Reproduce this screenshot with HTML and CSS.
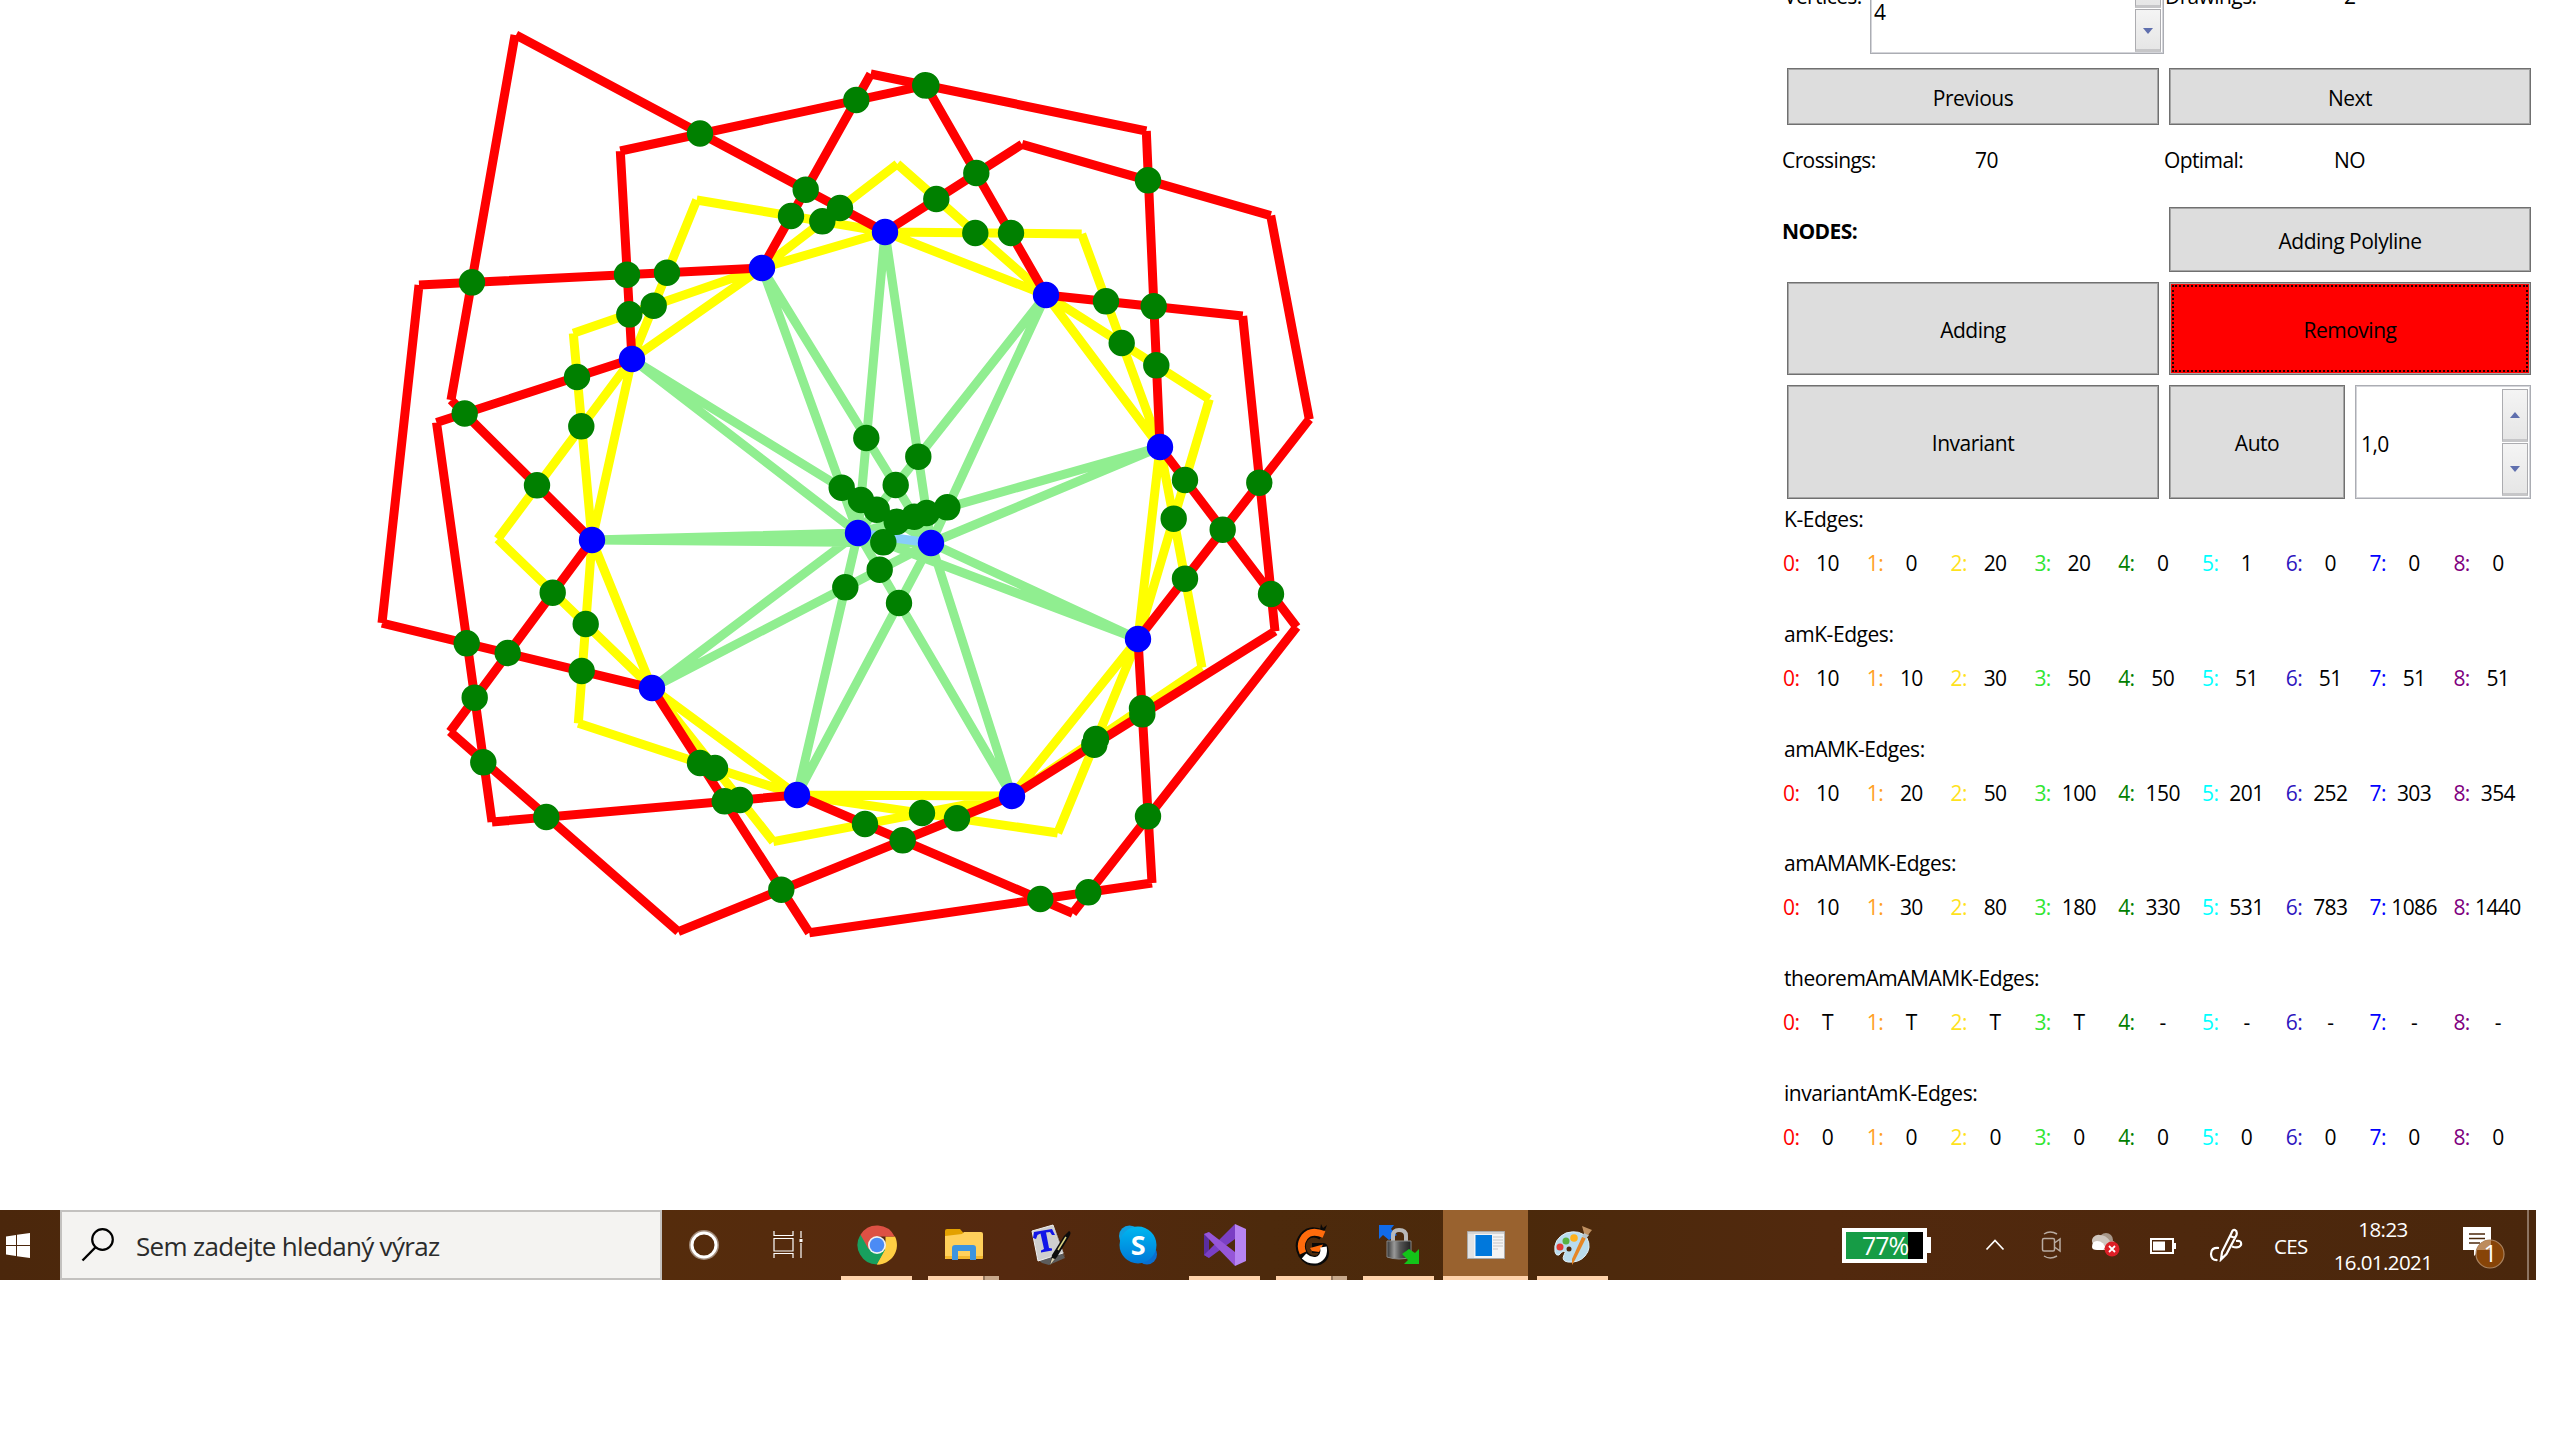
FILE: index.html
```html
<!DOCTYPE html>
<html lang="cs">
<head>
<meta charset="utf-8">
<title>Crossings</title>
<link rel="stylesheet" href="styles.css">
</head>
<body>
<main class="app">
  <svg class="canvas" viewBox="0 0 1760 1210" width="1760" height="1210">
    <path class="edge inner" d="M858 533L885 232M858 533L1046 295M858 533L1160 447M858 533L1138 639M858 533L1012 796M858 533L797 795M858 533L652 688M858 533L592 540M858 533L632 359M858 533L762 268M931 543L885 232M931 543L1046 295M931 543L1160 447M931 543L1138 639M931 543L1012 796M931 543L797 795M931 543L652 688M931 543L592 540M931 543L632 359M931 543L762 268"/>
    <path class="edge core" d="M858 533L931 543"/>
    <path class="edge ring" d="M885 232L1046 295M1046 295L1160 447M1160 447L1138 639M1138 639L1012 796M1012 796L797 795M797 795L652 688M652 688L592 540M592 540L632 359M632 359L762 268M762 268L885 232
      M632 359L696.7 200M696.7 200L885 232M762 268L897.3 164M897.3 164L1046 295M885 232L1081.7 234M1081.7 234L1160 447M1046 295L1209.3 399.3M1209.3 399.3L1138 639M1160 447L1202 667.7M1202 667.7L1012 796M1138 639L1057.7 833M1057.7 833L797 795M1012 796L773.3 841.7M773.3 841.7L652 688M797 795L578.3 723.3M578.3 723.3L592 540M652 688L497.7 539M497.7 539L632 359M592 540L573.3 333.3M573.3 333.3L762 268"/>
    <path class="edge outer" d="M885 232L516 35M515 35L451 400M451 400L592 540M632 359L436.5 422.5M436.5 422.5L492 822M492 822L797 795M762 268L419 285M419 285L382 623M382 623L652 688M632 359L620.3 151M620.3 151L925.7 85.3M925.7 85.3L1046 295M762 268L870.7 74M870.7 74L1146.3 131M1146.3 131L1160 447M885 232L1022 144.3M1022 144.3L1270.7 215.7M1270.7 215.7L1309.3 419.3M1309.3 419.3L1138 639M1046 295L1242.7 316M1242.7 316L1275 631.3M1275 631.3L1012 796M1160 447L1296.7 627M1296.7 627L1072.7 913.3M1072.7 913.3L797 795M1138 639L1152 883M1152 883L809.3 932.7M809.3 932.7L652 688M1012 796L678.3 931.7M678.3 931.7L450 731.7M450 731.7L592 540"/>
    <path class="dots crossing" d="M700 133.5h0M856.3 100h0M805.7 189.7h0M791 216h0M822.3 221.3h0M840 208h0M472 282.3h0M627 274.7h0M667 272.7h0M653.7 305.7h0M629.3 314.3h0M577 377h0M581.3 426.3h0M464.7 413.5h0M537 485.3h0M866.3 438h0M841.7 487.7h0M861 500h0
      M925.2 85.3h0M926.4 85.5h0M976.3 173h0M936.3 199h0M975.3 233h0M1011 233h0M1148 180.3h0M1106 301.3h0M1153.7 306.3h0M1121.7 343h0M1156.3 365.3h0M918.3 456.7h0M895.7 485h0M1185 480h0M1259.3 482.7h0
      M876.7 509.7h0M896.7 521.7h0M914.3 516.7h0M926.7 513h0M947.3 507.3h0M883.3 542.3h0M879.7 569.7h0M899 603h0M1173.7 518.7h0M1222.7 529.7h0M1185 578.7h0M1271 594h0M1142 708.3h0M1142.3 714.3h0M1096 739h0M1094.3 744.7h0M922 813h0M957 818.3h0M865 824h0M902.7 840.3h0M1148 816.3h0M1088.3 892.3h0M1040.3 899h0
      M845.3 587.3h0M552.7 592.7h0M585.7 624h0M581.7 671h0M466.7 643.3h0M507.7 653h0M474.7 697.7h0M483.3 762.3h0M546.3 817h0M700 763h0M715 768h0M724.7 801.3h0M740 800h0M781.3 889.7h0"/>
    <path class="dots vertex" d="M885 232h0M1046 295h0M1160 447h0M1138 639h0M1012 796h0M797 795h0M652 688h0M592 540h0M632 359h0M762 268h0M858 533h0M931 543h0"/>
  </svg>

  <section class="panel">
    <div class="row top-row">
      <span class="cell-label vertices">Vertices:</span>
      <div class="spinner vertices-spinner">
        <span class="spinner-value">4</span>
        <div class="spin-buttons">
          <span class="spin up"><i></i></span>
          <span class="spin down"><i></i></span>
        </div>
      </div>
      <span class="cell-label drawings">Drawings:</span>
      <span class="cell-value drawings-count">2</span>
    </div>
    <div class="row pager">
      <button class="btn left">Previous</button>
      <button class="btn right">Next</button>
    </div>
    <div class="row summary">
      <span class="s1">Crossings:</span><span class="s2">70</span><span class="s3">Optimal:</span><span class="s4">NO</span>
    </div>
    <div class="row nodes">
      <b class="left">NODES:</b>
      <button class="btn right">Adding Polyline</button>
    </div>
    <div class="row modes">
      <button class="btn left">Adding</button>
      <button class="btn right active"><span class="focus">Removing</span></button>
    </div>
    <div class="row tools">
      <button class="btn left">Invariant</button>
      <button class="btn auto">Auto</button>
      <div class="spinner step-spinner">
        <span class="spinner-value">1,0</span>
        <div class="spin-buttons">
          <span class="spin up"><i></i></span>
          <span class="spin down"><i></i></span>
        </div>
      </div>
    </div>
    <div class="stats" id="stats"></div>
  </section>
</main>

<footer class="taskbar">
  <div class="start"><svg width="24" height="25" viewBox="0 0 24 25"><path fill="#fff" d="M0 3.5L10 2V12H0ZM11 1.8L24 0V12H11ZM0 13H10V23L0 21.5ZM11 13H24V25L11 23.2Z"/></svg></div>
  <div class="search">
    <svg width="34" height="36" viewBox="0 0 34 36"><circle cx="21.5" cy="12.5" r="10.3" fill="none" stroke="#000" stroke-width="2.2"/><path d="M14.3 20.5L1.5 33.5" stroke="#000" stroke-width="2.4"/></svg>
    <span>Sem zadejte hledaný výraz</span>
  </div>
  <div class="task sys"><svg width="30" height="30"><circle cx="15" cy="15" r="14" fill="none" stroke="#fff" stroke-opacity=".45" stroke-width="2"/><circle cx="15" cy="15" r="12" fill="none" stroke="#fff" stroke-width="3"/></svg></div>
  <div class="task sys"><svg width="30" height="28" viewBox="0 0 30 28"><path d="M1 0V4.500H20V0M1 27V22.500H20V27M1 7.500H20V20H1ZM28 0V7M28 12V27" fill="none" stroke="#fff" stroke-width="1.2"/><path d="M26.500 8h3v3h-3z" fill="#fff"/></svg></div>
  <div class="task run"><svg width="40" height="40" viewBox="0 0 40 40"><path d="M20 20L3.300 10A19.500 19.500 0 0 0 20 39.500L28.500 25Z" fill="#18a05e"/><path d="M20 20H38.500A19.500 19.500 0 0 1 20 39.500L28.500 25Z" fill="#ffce43"/><path d="M28.500 11.500H38A19.500 19.500 0 0 1 20 39.500L28.500 24Z" fill="#ffce43"/><path d="M3.500 9.700A19.500 19.500 0 0 1 37.600 11.500H20L11.500 24Z" fill="#dd5144"/><circle cx="20" cy="20" r="9" fill="#f1f1f1"/><circle cx="20" cy="20" r="7.300" fill="#4c8bf5"/></svg></div>
  <div class="task run stacked"><svg width="40" height="34" viewBox="0 0 40 34"><path d="M1 3Q1 1 3 1H16L19.500 5V9H1Z" fill="#e3a100"/><path d="M1 8L18 6L20 4H37Q39 4 39 6V29Q39 31 37 31H1Z" fill="#ffd05b"/><path d="M1 28H39V30Q39 31 37 31H3Q1 31 1 30Z" fill="#f3b72d"/><path d="M8 32V20Q8 17 11 17H29Q32 17 32 20V32H26V23H14V32Z" fill="#3c94df"/></svg></div>
  <div class="task"><svg width="42" height="42" viewBox="0 0 42 42"><path d="M6 34L12 39L19 41L35 34L32 28Z" fill="#5c5c5c"/><path d="M2 7L23 1L33 29L8 37Z" fill="#cfcfcf" stroke="#efefef"/><path d="M23 1L33 29L35 33L28 13Z" fill="#888"/><path d="M3 14L4 8L22 5L25 11H22L20 8L16 8.500L19 24L22 24.500V26.500L11 28.500V26.500L14 25L10.500 9.500L7.500 11L6 15Z" fill="#1216e8"/><path d="M39 7Q42 8 39 13L27 33L20 41L22 31L34 12Z" fill="#0c0c0c"/><path d="M36 13L28 26" stroke="#ddd484" stroke-width="1.500"/><path d="M22 34L20 41L25 35Z" fill="#d6cdb0"/></svg></div>
  <div class="task"><svg width="40" height="40" viewBox="0 0 40 40"><defs><linearGradient id="sky" x2="0" y2="1"><stop stop-color="#00b7f0"/><stop offset="1" stop-color="#0078d7"/></linearGradient></defs><circle cx="11.500" cy="11" r="10.500" fill="#0f9fe0"/><circle cx="29" cy="29.500" r="10" fill="#0a6fd0"/><circle cx="20" cy="20" r="18.500" fill="url(#sky)"/><text x="20" y="29.500" text-anchor="middle" class="skype-s">S</text></svg></div>
  <div class="task run"><svg width="44" height="44" viewBox="0 0 44 44"><path d="M1 11L6 9V35L1 32Z" fill="#5a2da0"/><path d="M1 32L32 1V16L6 35Z" fill="#7a3fc4"/><path d="M1 11L6 9L32 29V43Z" fill="#9656d8"/><path d="M32 1L43 6V38L32 43Z" fill="#b784f2"/></svg></div>
  <div class="task run stacked"><svg width="34" height="42" viewBox="0 0 34 42"><path d="M27 11Q16 5 9 13Q3 21 8 30Q14 39 24 36Q31 32 28 24H17" fill="none" stroke="#090909" stroke-width="10" stroke-linejoin="round"/><path d="M25 6L26 0L28 4L32 1L30 6" fill="#090909"/><path d="M29 10.500Q16 5 9.500 13Q4 21 8 29" fill="none" stroke="#ff6b0c" stroke-width="7"/><path d="M15 24L28 20.500L24 28L17 27Z" fill="#ff6b0c"/><path d="M9 32Q15 37.500 22 36Q30 33 28.500 23" fill="none" stroke="#fff" stroke-width="6.500"/></svg></div>
  <div class="task run"><svg width="42" height="42" viewBox="0 0 42 42"><defs><linearGradient id="lk"><stop stop-color="#333"/><stop offset=".3" stop-color="#999"/><stop offset=".55" stop-color="#555"/><stop offset="1" stop-color="#222"/></linearGradient></defs><path d="M1 1H16L13 5L19 11L11 16L5 11L1 15Z" fill="#116be8"/><path d="M15 19V12Q15 6 21 6Q28 6 28 12V19" fill="none" stroke="#b9b9b9" stroke-width="4"/><path d="M9 17H33V33Q21 37 9 33Z" fill="url(#lk)" stroke="#888"/><path d="M41 25V40H26L30 36L24 30L31 25L37 29Z" fill="#13c419"/></svg></div>
  <div class="task run selected"><svg width="38" height="28" viewBox="0 0 38 28"><path d="M.5.500H37.500V27.500H.5Z" fill="#f4f4f4" stroke="#aaa"/><path d="M1 1H37V3H1Z" fill="#d5d5d5"/><path d="M1 3H7V27H1Z" fill="#e3e3e3"/><path d="M8.500 4H25V25H8.500Z" fill="#0078dc"/><path d="M26 6H36M26 9H36M26 12H36M26 15H36M26 18H31" stroke="#c6c6c6"/></svg></div>
  <div class="task run"><svg width="42" height="42" viewBox="0 0 42 42"><path d="M3 28Q1 15 14 9Q28 5 35 14Q40 24 33 32Q27 39 16 38Q9 37 12 31Q14 28 12 27Q9 28 7 31Q4 32 3 28Z" fill="#b9dcee" stroke="#e3f2f9"/><circle cx="8" cy="23" r="3.500" fill="#e33c35"/><circle cx="14" cy="17" r="3.500" fill="#59b341"/><circle cx="22" cy="14" r="3.800" fill="#ffb11b"/><circle cx="17" cy="25" r="2.500" fill="#512a0b"/><path d="M30 13L34 14L23 36L20 41V35Z" fill="#e58626"/><path d="M30 12L33 8L37 11L34 15Z" fill="#b9c3c8"/><path d="M30 2L40 6L36 11L32 9Z" fill="#c09061"/></svg></div>

  <div class="tray">
    <div class="meter"><div class="meter-body"><div class="meter-fill"></div><span>77%</span></div><i></i></div>
    <svg class="t-chevron" width="20" height="12" viewBox="0 0 20 12"><path d="M1.500 10.500L10 1.500L18.500 10.500" fill="none" stroke="#fff" stroke-width="1.700"/></svg>
    <svg class="t-meet" width="22" height="28" viewBox="0 0 22 28"><path d="M3 3Q9-1 16 3M3 25Q9 29 16 25M3 7.500H12Q13.500 7.500 13.500 9V18.500Q13.500 20 12 20H3Q1.500 20 1.500 18.500V9Q1.500 7.500 3 7.500ZM13.500 12L19 8V20L13.500 16" fill="none" stroke="#b9aca2" stroke-width="1.500"/></svg>
    <svg class="t-cloud" width="30" height="26" viewBox="0 0 30 26"><circle cx="15" cy="8" r="7" fill="#a79789"/><path d="M9 3a6.500 6 0 0 0-7 9l12 5 5-8q-4-6-10-6Z" fill="#cfc6be"/><path d="M1 15Q1 9 6 9Q13 9 15 18H6Q1 18 1 15Z" fill="#fff"/><path d="M18 10Q24 7 24 12L12 18Z" fill="#c0b3a8"/><circle cx="21" cy="17" r="7.500" fill="#dc1f26"/><path d="M18 14L24 20M24 14L18 20" stroke="#fff" stroke-width="1.800"/></svg>
    <svg class="t-battery" width="26" height="16" viewBox="0 0 26 16"><path d="M1 1H23V15H1Z" fill="none" stroke="#fff" stroke-width="2"/><path d="M3 3.500H15V12.500H3ZM24 5H26V11H24Z" fill="#fff"/></svg>
    <svg class="t-pen" width="34" height="34" viewBox="0 0 34 34"><path d="M22.500 5Q23.500 1.500 26 2Q28.500 3 27.500 7L17.500 26L12 31.500L13 24ZM21 8L26 10M10 20Q2 19 2 26Q2 32.500 8.500 32M27 13Q33 12 32 17Q29.500 21 23 18.500" fill="none" stroke="#fff" stroke-width="2.200"/></svg>
    <span class="lang">CES</span>
    <div class="clock"><span>18:23</span><span>16.01.2021</span></div>
    <svg class="t-note" width="46" height="44" viewBox="0 0 46 44"><path d="M1 1H29V24H18L12 30V24H1Z" fill="#fff"/><path d="M7 8H23M7 12.500H23M7 17H18" stroke="#4c290c" stroke-width="1.500"/><circle cx="28" cy="28" r="14" fill="#874407" stroke="#a9825f" stroke-width="1.200"/><path d="M14.500 24A14 14 0 0 1 29 14V24H18Z" fill="#bd8b5c"/><text x="28" y="36" text-anchor="middle" class="badge">1</text></svg>
    <i class="peek"></i>
  </div>
</footer>
<script src="stats.js"></script>
</body>
</html>
```
FILE: stats.js
```js
// Builds the k-edge tables: one title line and one row of nine labelled values each.
const tables = [
  ['K-Edges:', [10, 0, 20, 20, 0, 1, 0, 0, 0]],
  ['amK-Edges:', [10, 10, 30, 50, 50, 51, 51, 51, 51]],
  ['amAMK-Edges:', [10, 20, 50, 100, 150, 201, 252, 303, 354]],
  ['amAMAMK-Edges:', [10, 30, 80, 180, 330, 531, 783, 1086, 1440]],
  ['theoremAmAMAMK-Edges:', ['T', 'T', 'T', 'T', '-', '-', '-', '-', '-']],
  ['invariantAmK-Edges:', [0, 0, 0, 0, 0, 0, 0, 0, 0]]
];
document.getElementById('stats').innerHTML = tables.map(([title, values]) =>
  `<div class="stat"><div class="stat-title">${title}</div><div class="stat-row">` +
  values.map((v, k) => `<span class="k k${k}">${k}:</span><span class="v">${v}</span>`).join('') +
  '</div></div>').join('');
```
FILE: styles.css
```css
* { box-sizing: border-box; }
body {
  margin: 0;
  width: 2560px;
  height: 1440px;
  overflow: hidden;
  background: #fff;
  color: #000;
  font: 21px/28px "Open Sans", "Noto Sans", sans-serif;
  letter-spacing: -0.6px;
}
.app { display: flex; height: 1210px; overflow: hidden; }
.canvas { flex: none; display: block; }
.edge { fill: none; stroke-width: 9; }
.inner { stroke: #90ee90; }
.core { stroke: #87cefa; }
.ring { stroke: #ff0; }
.outer { stroke: #f00; }
.dots { stroke-width: 26.4; stroke-linecap: round; }
.crossing { stroke: #008000; }
.vertex { stroke: #00f; }

.panel { width: 800px; padding-left: 22px; }
.row { display: flex; padding-left: 5px; white-space: nowrap; }
.left { width: 372px; margin-right: 10px; }
.right { width: 362px; }
.btn {
  font: inherit;
  letter-spacing: -0.5px;
  color: #000;
  background: #ddd;
  border: 1px solid #707070;
  box-shadow: inset 0 0 0 1px #a5a5a5;
  border-radius: 0;
  padding: 2px 0 0;
}
.top-row { height: 68px; padding-left: 2px; }
.cell-label, .cell-value { margin-top: -18px; }
.vertices { width: 86px; }
.drawings { width: 179px; }
.spinner {
  display: flex;
  justify-content: space-between;
  align-items: center;
  border: 1px solid #abadb3;
  box-shadow: inset 0 0 0 1px #d4d5da;
  background: #fff;
}
.vertices-spinner { width: 294px; height: 94px; margin-top: -40px; padding: 3px 2px 1px 3px; margin-right: 1px; }
.vertices-spinner .spinner-value { padding-top: 8px; }
.spin-buttons { width: 26px; height: 100%; display: flex; flex-direction: column; gap: 1px; }
.spin {
  flex: 1;
  display: flex;
  align-items: center;
  justify-content: center;
  border: 1px solid #acacb0;
  border-bottom: 3px solid #c6c6c8;
  background: linear-gradient(#f4f4f4, #e6e6e6);
}
.spin i { border: 5px solid transparent; border-top-width: 0; border-bottom: 6px solid #5f6fae; }
.spinner .down i { border-top: 6px solid #5f6fae; border-bottom-width: 0; }
.vertices-spinner .down i { margin-top: 3px; }
.pager { height: 57px; }
.summary { height: 82px; padding: 21px 0 0; }
.s1 { width: 193px; }
.s2 { width: 189px; }
.s3 { width: 170px; }
.nodes { height: 65px; padding-left: 0; }
.nodes .left { width: 377px; padding-top: 10px; }
.modes { height: 93px; margin-top: 10px; }
.active { background: #f00; padding: 2px; }
.focus { display: flex; height: 100%; align-items: center; justify-content: center; padding-top: 2px; border: 2px dotted #200; }
.tools { height: 114px; margin-top: 10px; }
.auto { width: 176px; margin-right: 10px; }
.step-spinner { width: 176px; padding: 3px 2px 2px 5px; }
.step-spinner .spinner-value { padding-top: 3px; }

.stat { height: 114.8px; padding: 6px 0 0 2px; }
.stat-title { letter-spacing: -0.45px; }
.stat-row { display: flex; margin-top: 16px; }
.k { width: 18px; margin-left: -1px; }
.v { width: 53px; margin-right: 13.8px; text-align: center; }
.k0 { color: #f00; }
.k1 { color: #ffa01e; }
.k2 { color: #ffe21c; }
.k3 { color: #32e632; }
.k4 { color: #008000; }
.k5 { color: #0ff; }
.k6 { color: #2d14be; }
.k7 { color: #00f; }
.k8 { color: #800080; }

.taskbar {
  display: flex;
  width: 2536px;
  height: 70px;
  background: linear-gradient(90deg, #4b270c, #552c0c 26%, #55290f 40%, #4d2a0c 50%, #4b290b 60%, #52290e 72%, #4a270c);
}
.start { width: 60px; padding: 23px 0 0 6px; }
.search {
  width: 602px;
  display: flex;
  border: 2px solid #c3c1bf;
  background: #f4f3f1;
  color: #2b2b2b;
  font-size: 26px;
  letter-spacing: -0.68px;
  line-height: 35px;
  padding: 15px 0 0 20px;
}
.search svg { margin-left: -1px; }
.search span { margin: 2px 0 0 21px; white-space: nowrap; }
.task { width: 87px; display: flex; align-items: center; justify-content: center; position: relative; }
.sys { width: 84px; }
.sys + .run { margin-left: 3px; }
.run::after { content: ""; position: absolute; left: 8px; right: 8px; bottom: 0; height: 4px; background: #ffd3ab; }
.stacked::after { background: linear-gradient(90deg, #ffd3ab 55px, #93775f 55px 57px, #c8a98c 57px); }
.selected { width: 85px; margin: 0 1px; background: #99622f; }
.selected::after { left: 0; right: 0; }
.skype-s { font: bold 27px "Open Sans", sans-serif; fill: #fff; }

.tray { margin-left: auto; width: 694px; display: flex; align-items: center; color: #fff; font-size: 20.5px; }
.meter { display: flex; align-items: center; width: 89px; height: 35px; margin-right: 54px; }
.meter-body { display: grid; width: 85px; height: 35px; background: #000; border: 4px solid #fff; }
.meter-fill { grid-area: 1 / 1; width: 62px; background: #169c46; }
.meter-body span { grid-area: 1 / 1; padding-left: 16px; font-size: 25px; line-height: 27px; letter-spacing: -1px; }
.meter i { width: 4px; height: 16px; background: #fff; }
.t-chevron { margin-right: 36px; }
.t-meet { margin-right: 28px; }
.t-cloud { margin-right: 29px; }
.t-battery { margin: 2px 33px 0 0; }
.t-pen { margin-right: 31px; }
.lang { width: 55px; padding-top: 2px; }
.clock { width: 108px; display: flex; flex-direction: column; align-items: center; gap: 5px; }
.t-note { margin: 5px 0 0 25px; }
.badge { font: 24px "Open Sans", sans-serif; fill: #fff; }
.peek { width: 2px; height: 70px; margin-left: auto; margin-right: 7px; background: #8c7462; }
.tray > * { flex: none; }
```
